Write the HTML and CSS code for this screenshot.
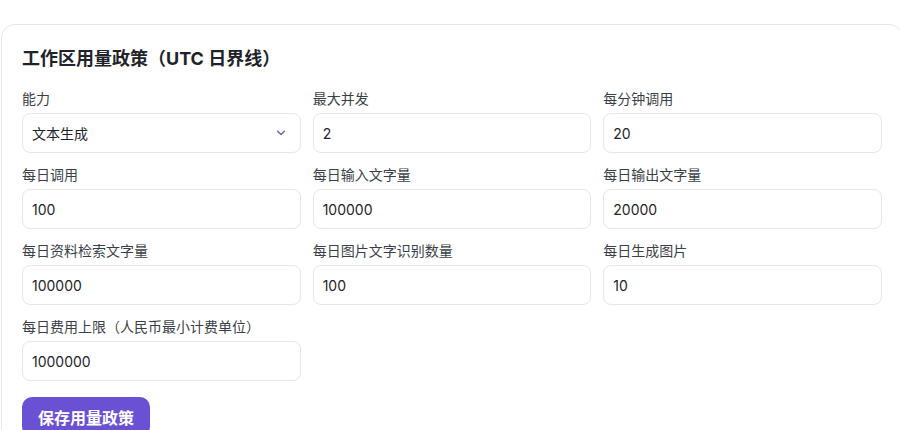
FILE: index.html
```html
<!DOCTYPE html>
<html lang="zh-CN">
<head>
<meta charset="utf-8">
<link rel="stylesheet" href="styles.css">
</head>
<body>
<section class="card">
  <h2 class="title">工作区用量政策（UTC 日界线）</h2>
  <div class="grid">
    <label class="field">
      <span class="label">能力</span>
      <span class="input select">文本生成
        <svg class="chev" width="10" height="6" viewBox="0 0 10 6"><path d="M1.5 1.2 L5 4.6 L8.5 1.2" fill="none" stroke="#6b64a6" stroke-width="1.4" stroke-linecap="round" stroke-linejoin="round"/></svg>
      </span>
    </label>
    <label class="field"><span class="label">最大并发</span><span class="input">2</span></label>
    <label class="field"><span class="label">每分钟调用</span><span class="input">20</span></label>
    <label class="field"><span class="label">每日调用</span><span class="input">100</span></label>
    <label class="field"><span class="label">每日输入文字量</span><span class="input">100000</span></label>
    <label class="field"><span class="label">每日输出文字量</span><span class="input">20000</span></label>
    <label class="field"><span class="label">每日资料检索文字量</span><span class="input">100000</span></label>
    <label class="field"><span class="label">每日图片文字识别数量</span><span class="input">100</span></label>
    <label class="field"><span class="label">每日生成图片</span><span class="input">10</span></label>
    <label class="field"><span class="label">每日费用上限（人民币最小计费单位）</span><span class="input">1000000</span></label>
  </div>
  <button class="save">保存用量政策</button>
</section>
</body>
</html>
```

FILE: styles.css
```css
html, body {
  margin: 0;
  padding: 0;
  background: #ffffff;
  overflow: hidden;
}
body {
  font-family: Inter, "Noto Sans CJK SC", sans-serif;
  color: #1f2937;
  padding: 24px 0 0 1px;
}
.card {
  width: 860px;
  padding: 20px 20px 20px 20px;
  border: 1px solid #e6e7ea;
  border-radius: 14px;
  background: #fff;
}
.title {
  margin: 0 0 16px 0;
  font-size: 18px;
  line-height: 28px;
  font-weight: 700;
  color: #1f2329;
}
.grid {
  display: grid;
  grid-template-columns: repeat(3, 1fr);
  column-gap: 12px;
  row-gap: 12px;
}
.field {
  display: flex;
  flex-direction: column;
  gap: 4px;
}
.label {
  font-size: 14px;
  line-height: 20px;
  color: #3a3f47;
}
.input {
  display: flex;
  align-items: center;
  justify-content: space-between;
  box-sizing: border-box;
  height: 40px;
  padding: 0 12px 0 9px;
  border: 1px solid #e5e7eb;
  border-radius: 8px;
  font-size: 14px;
  color: #1f2329;
  background: #fff;
}
.select {
  padding-right: 14px;
}
.chev {
  display: block;
}
.save {
  margin-top: 16px;
  height: 40px;
  padding: 0 16px;
  border: none;
  border-radius: 10px;
  background: #6a50d3;
  color: #fff;
  font-family: Inter, "Noto Sans CJK SC", sans-serif;
  font-size: 16px;
  font-weight: 700;
}
```
